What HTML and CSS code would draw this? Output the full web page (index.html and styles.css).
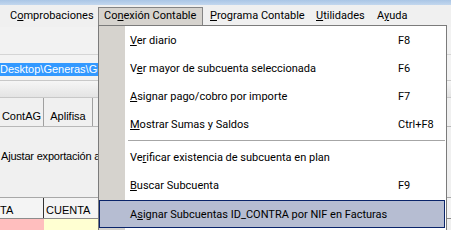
FILE: index.html
```html
<!DOCTYPE html>
<html lang="es">
<head>
<meta charset="utf-8">
<link rel="stylesheet" href="styles.css">
</head>
<body>
<div class="app">
  <div class="titlebar"></div>
  <div class="menubar">
    <span class="mitem m1">C<u>o</u>mprobaciones</span>
    <span class="mitem m2 active">Co<u>n</u>exión Contable</span>
    <span class="mitem m3"><u>P</u>rograma Contable</span>
    <span class="mitem m4"><u>U</u>tilidades</span>
    <span class="mitem m5">A<u>y</u>uda</span>
  </div>
  <div class="content">
    <div class="toolbar"></div>
    <div class="pathrow"><span class="sel">Desktop\Generas\Generas</span></div>
    <div class="panelbar"></div>
    <div class="tabs">
      <span class="tab t1">ContAG</span>
      <span class="tab t2">Aplifisa</span>
    </div>
    <div class="tabbody">
      <div class="adjust">Ajustar exportación a disco</div>
    </div>
    <div class="gridhead">
      <span class="gh c1">TA</span>
      <span class="gh c2">CUENTA</span>
    </div>
    <div class="gridrow">
      <span class="cell pink"></span>
      <span class="cell yellow"></span>
    </div>
  </div>
  <div class="dropdown">
    <div class="strip"></div>
    <div class="items">
      <div class="item"><span class="lbl"><u>V</u>er diario</span><span class="key">F8</span></div>
      <div class="item"><span class="lbl">V<u>e</u>r mayor de subcuenta seleccionada</span><span class="key">F6</span></div>
      <div class="item"><span class="lbl"><u>A</u>signar pago/cobro por importe</span><span class="key">F7</span></div>
      <div class="item"><span class="lbl"><u>M</u>ostrar Sumas y Saldos</span><span class="key">Ctrl+F8</span></div>
      <div class="sep"></div>
      <div class="item"><span class="lbl">Ve<u>r</u>ificar existencia de subcuenta en plan</span><span class="key"></span></div>
      <div class="item"><span class="lbl"><u>B</u>uscar Subcuenta</span><span class="key">F9</span></div>
      <div class="item hl"><span class="lbl">A<u>s</u>ignar Subcuentas ID_CONTRA por NIF en Facturas</span><span class="key"></span></div>
    </div>
  </div>
</div>
</body>
</html>
```
FILE: styles.css
```css
html, body {
  margin: 0;
  padding: 0;
}
body {
  width: 451px;
  height: 230px;
  overflow: hidden;
  background: #f0f0f0;
  font-family: Roboto, "Noto Sans", sans-serif;
}
.app {
  position: relative;
  width: 451px;
  height: 230px;
  overflow: hidden;
}
.titlebar {
  height: 5px;
  background: linear-gradient(#aac6e6, #c3d7ee);
}
.menubar {
  height: 22px;
  display: flex;
  align-items: flex-start;
  background: #f0f0f0;
  font-size: 11px;
  color: #000;
}
.mitem {
  height: 19px;
  margin-top: 2px;
  line-height: 16px;
  padding: 0 0 0 6px;
  box-sizing: border-box;
  white-space: nowrap;
  border: 1px solid transparent;
  border-bottom: none;
}
.m1 { margin-left: 3px; width: 95px; }
.m2 { width: 105px; }
.m3 { width: 106px; }
.m4 { width: 61px; }
.m5 { width: 44px; }
.mitem.active {
  background: #d6d3ce;
  border-color: #848484;
  padding-left: 5px;
}
.content {
  font-family: "Liberation Sans", Arial, sans-serif;
  font-size: 11px;
  color: #000;
}
.toolbar {
  height: 27px;
  border-bottom: 1px solid #d5d5d5;
  background: #f2f2f2;
}
.pathrow {
  height: 26px;
  display: flex;
  align-items: center;
  padding-top: 3px;
  box-sizing: border-box;
  background: #f3f3f3;
  border-bottom: 1px solid #c8c8c8;
  white-space: nowrap;
  overflow: hidden;
}
.sel {
  background: #3399ff;
  color: #fff;
  height: 13px;
  line-height: 13px;
  padding-right: 10px;
}
.panelbar {
  height: 16px;
  background: linear-gradient(#f6f6f6, #e4e4e4);
  border-bottom: 1px solid #c8c8c8;
}
.tabs {
  height: 28px;
  display: flex;
  border-bottom: 1px solid #b8b8b8;
  background: #f0f0f0;
}
.tab {
  display: flex;
  align-items: center;
  justify-content: center;
  border-right: 1px solid #a0a0a0;
  padding-top: 8px;
  box-sizing: border-box;
}
.t1 { width: 44px; }
.t2 { width: 49px; }
.tabbody {
  height: 70px;
  background: #f0f0f0;
  border-bottom: 1px solid #a8a8a8;
}
.adjust {
  padding: 23px 0 0 1px;
  white-space: nowrap;
  letter-spacing: -0.2px;
}
.gridhead {
  height: 20px;
  display: flex;
  background: #f4f4f4;
  border-bottom: 1px solid #8c8c8c;
}
.gh {
  display: flex;
  align-items: center;
  padding-top: 3px;
  font-size: 11px;
}
.c1 { width: 44px; border-right: 1px solid #333; padding-left: 0; box-sizing: border-box; }
.c2 { width: 54px; padding-left: 2px; }
.gridrow {
  height: 12px;
  display: flex;
}
.cell { height: 12px; }
.pink { width: 44px; background: #ffbebe; }
.yellow { width: 54px; background: #ffffd2; }

.dropdown {
  position: absolute;
  left: 98px;
  top: 25px;
  width: 349px;
  height: 210px;
  background: #fff;
  border: 1px solid #7b7b7b;
  box-sizing: border-box;
  font-size: 11px;
  color: #000;
}
.strip {
  position: absolute;
  left: 0;
  top: 0;
  bottom: 0;
  width: 26px;
  background: #d6d3ce;
}
.items {
  position: relative;
}
.item {
  height: 28px;
  display: flex;
  align-items: center;
  padding-left: 31px;
  white-space: nowrap;
  box-sizing: border-box;
}
.lbl {
  flex: 1;
}
.key {
  width: 48px;
}
.sep {
  height: 5px;
  margin-left: 29px;
  margin-right: 1px;
  position: relative;
}
.sep::after {
  content: "";
  position: absolute;
  left: 0;
  right: 0;
  top: 2px;
  height: 1px;
  background: #a6a6a6;
}
.item.hl {
  background: #b6bdd2;
  border: 1px solid #0a246a;
  margin: 1px 1px 0 0;
  padding-left: 30px;
}
```
